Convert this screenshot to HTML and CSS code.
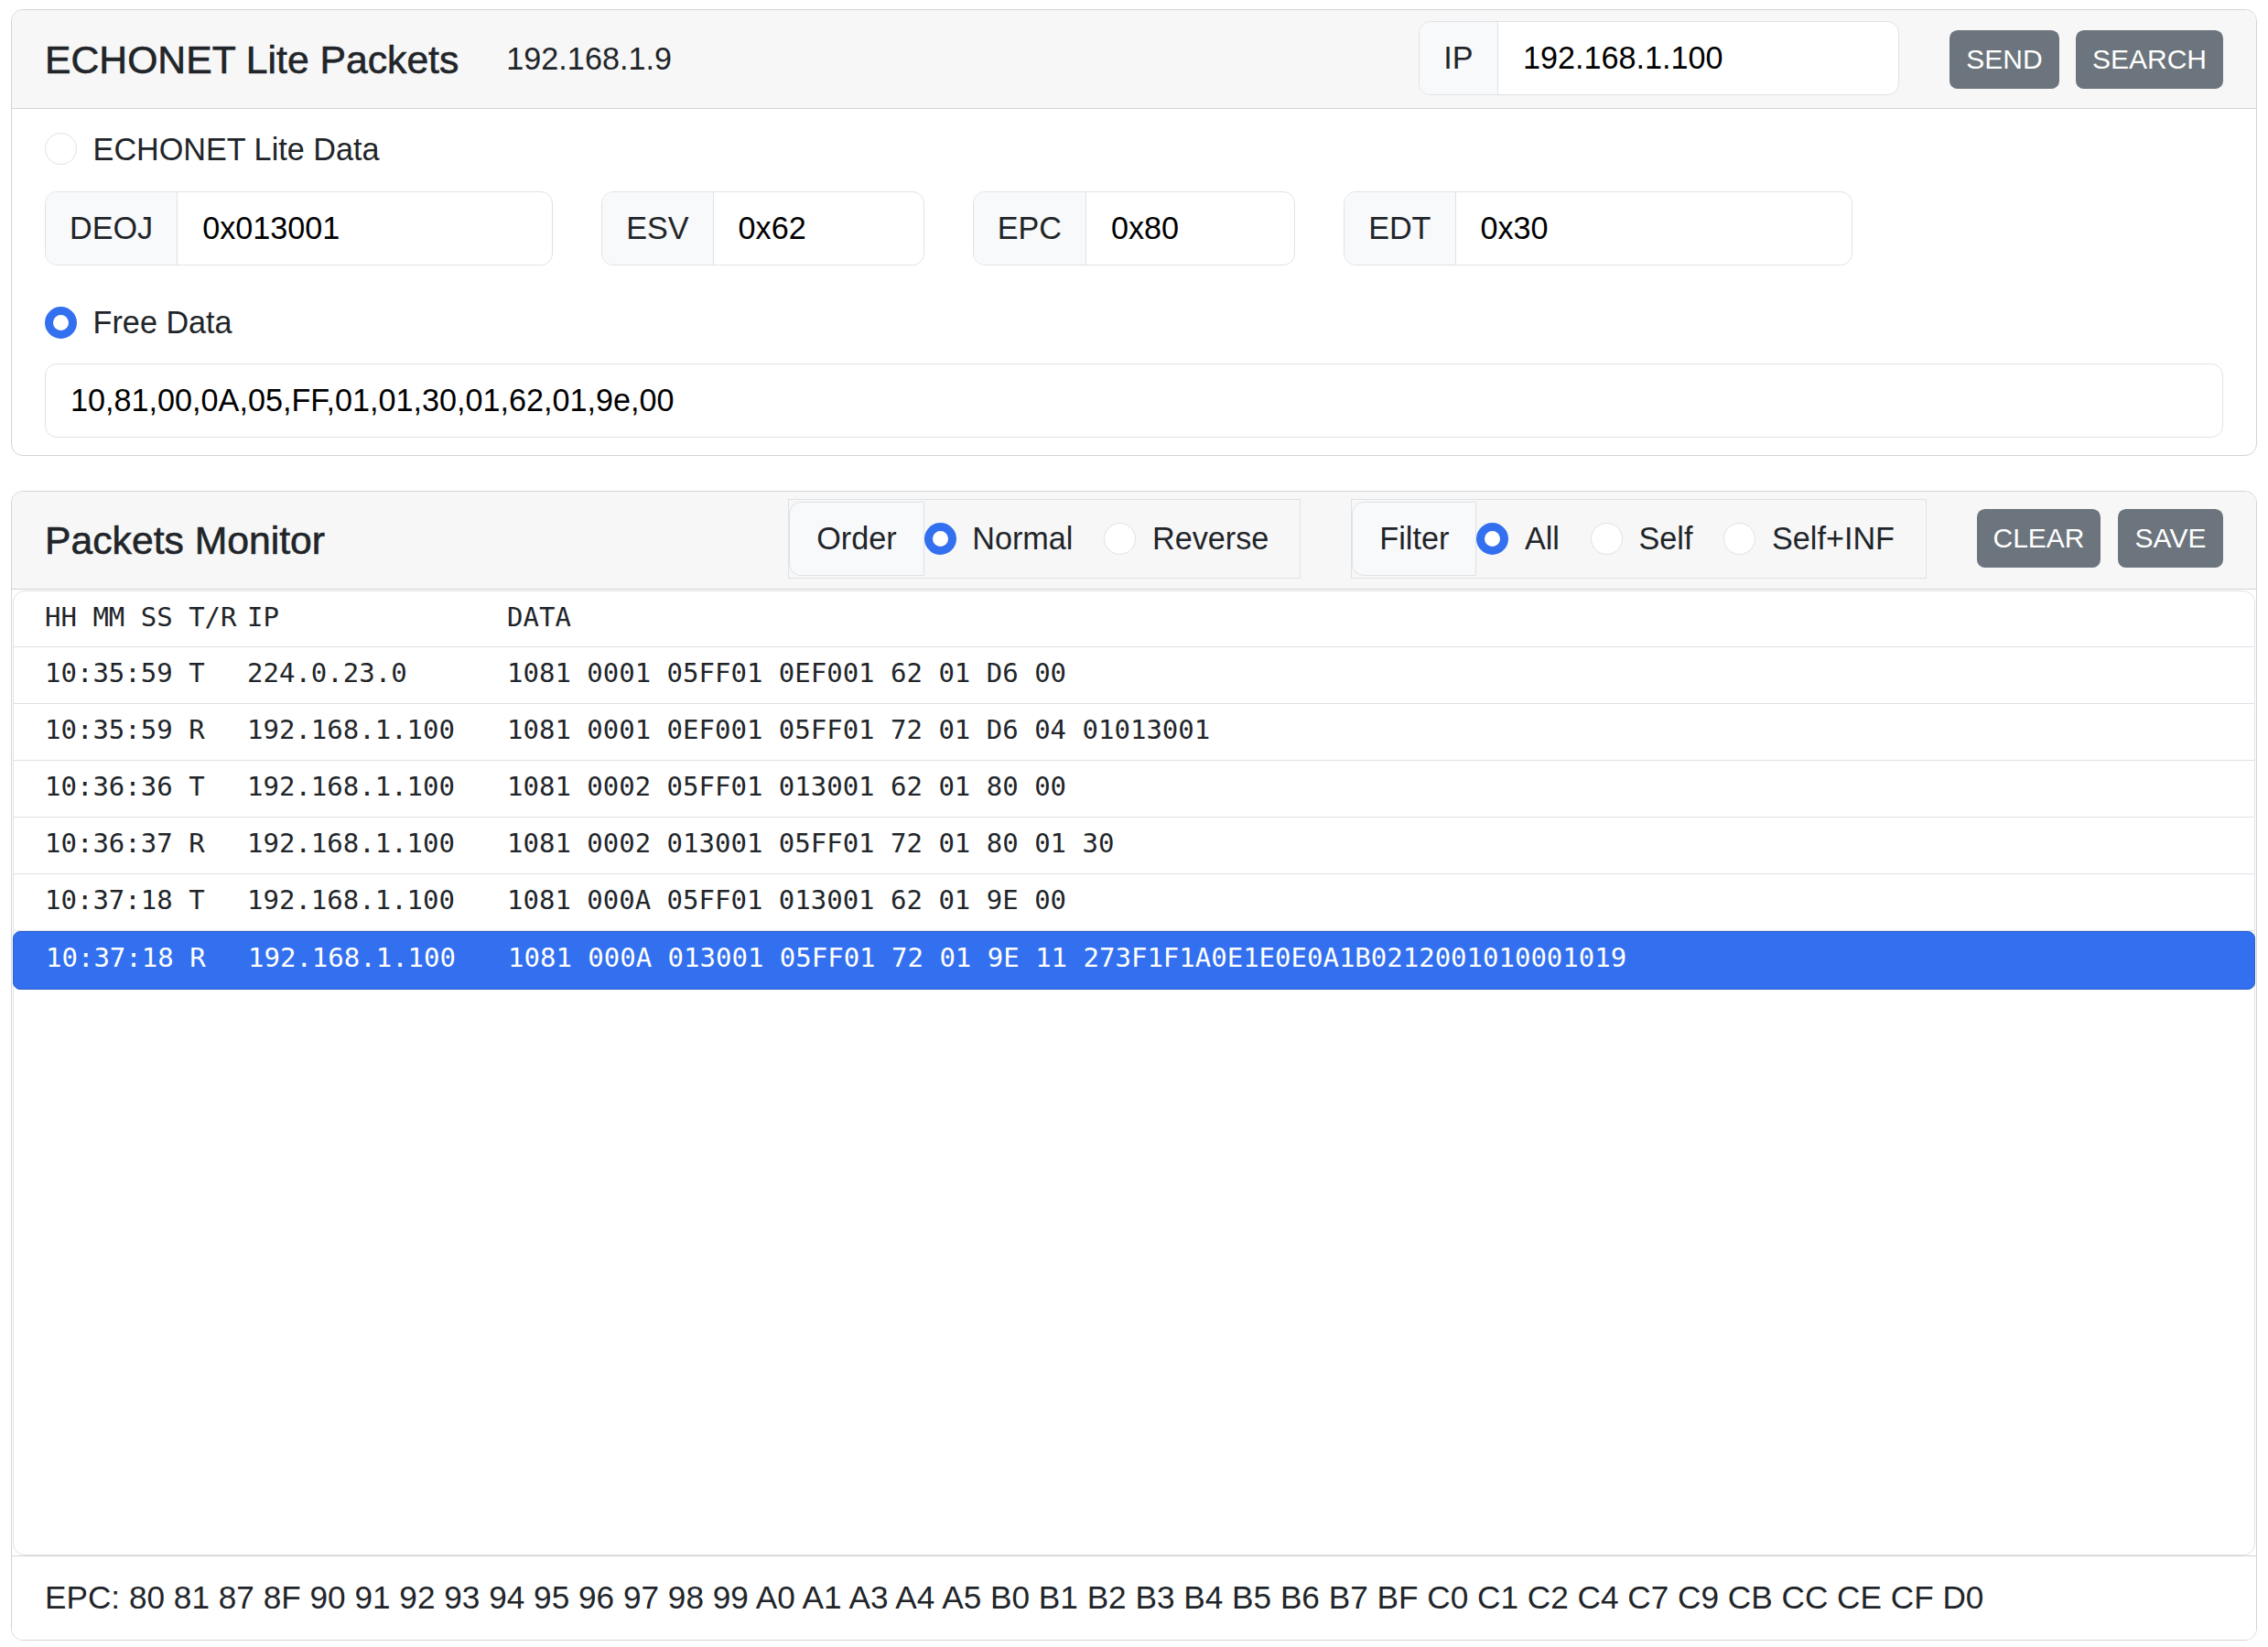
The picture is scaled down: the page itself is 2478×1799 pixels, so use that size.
FILE: index.html
```html
<!DOCTYPE html>
<html lang="en">
<head>
<meta charset="utf-8">
<title>ECHONET Lite Packets</title>
<link rel="stylesheet" href="styles.css">
</head>
<body>
  <div class="card card-send">
    <div class="card-header hdr-send">
      <h5 class="title">ECHONET Lite Packets</h5>
      <span class="myip">192.168.1.9</span>
      <div class="spacer"></div>
      <div class="igroup ip-group">
        <span class="ig-text ig-ip">IP</span>
        <span class="ig-input">192.168.1.100</span>
      </div>
      <button class="btn btn-send">SEND</button>
      <button class="btn btn-search">SEARCH</button>
    </div>
    <div class="card-body body-send">
      <div class="check"><span class="radio"></span><span class="check-label">ECHONET Lite Data</span></div>
      <div class="el-grid">
        <div class="igroup span3"><span class="ig-text ig-deoj">DEOJ</span><span class="ig-input">0x013001</span></div>
        <div class="igroup span2"><span class="ig-text">ESV</span><span class="ig-input">0x62</span></div>
        <div class="igroup span2"><span class="ig-text">EPC</span><span class="ig-input">0x80</span></div>
        <div class="igroup span3"><span class="ig-text">EDT</span><span class="ig-input">0x30</span></div>
      </div>
      <div class="check check-free"><span class="radio checked"></span><span class="check-label">Free Data</span></div>
      <div class="free-input">10,81,00,0A,05,FF,01,01,30,01,62,01,9e,00</div>
    </div>
  </div>

  <div class="card card-monitor">
    <div class="card-header hdr-monitor">
      <h5 class="title">Packets Monitor</h5>
      <div class="spacer"></div>
      <div class="rgroup">
        <span class="rg-text">Order</span>
        <span class="icheck"><span class="radio checked"></span><span>Normal</span></span>
        <span class="icheck"><span class="radio"></span><span>Reverse</span></span>
      </div>
      <div class="rgroup rgroup-filter">
        <span class="rg-text">Filter</span>
        <span class="icheck"><span class="radio checked"></span><span>All</span></span>
        <span class="icheck"><span class="radio"></span><span>Self</span></span>
        <span class="icheck"><span class="radio"></span><span>Self+INF</span></span>
      </div>
      <button class="btn btn-clear">CLEAR</button>
      <button class="btn btn-save">SAVE</button>
    </div>
    <div class="card-body body-monitor">
      <div class="plist">
        <div class="prow phead"><span>HH MM SS T/R</span><span>IP</span><span>DATA</span></div>
        <div class="prow"><span>10:35:59 T</span><span>224.0.23.0</span><span>1081 0001 05FF01 0EF001 62 01 D6 00</span></div>
        <div class="prow"><span>10:35:59 R</span><span>192.168.1.100</span><span>1081 0001 0EF001 05FF01 72 01 D6 04 01013001</span></div>
        <div class="prow"><span>10:36:36 T</span><span>192.168.1.100</span><span>1081 0002 05FF01 013001 62 01 80 00</span></div>
        <div class="prow"><span>10:36:37 R</span><span>192.168.1.100</span><span>1081 0002 013001 05FF01 72 01 80 01 30</span></div>
        <div class="prow"><span>10:37:18 T</span><span>192.168.1.100</span><span>1081 000A 05FF01 013001 62 01 9E 00</span></div>
        <div class="prow active"><span>10:37:18 R</span><span>192.168.1.100</span><span>1081 000A 013001 05FF01 72 01 9E 11 273F1F1A0E1E0E0A1B0212001010001019</span></div>
      </div>
    </div>
    <div class="card-footer">EPC: 80 81 87 8F 90 91 92 93 94 95 96 97 98 99 A0 A1 A3 A4 A5 B0 B1 B2 B3 B4 B5 B6 B7 BF C0 C1 C2 C4 C7 C9 CB CC CE CF D0</div>
  </div>
</body>
</html>
```

FILE: styles.css
```css
* { box-sizing: border-box; }

html, body { margin: 0; }

body {
  padding: 10px 12px 0;
  background: #fff;
  color: #212529;
  font-family: "Liberation Sans", Arial, sans-serif;
  font-size: 34.2px;
  line-height: 52.8px;
}

.card {
  border: 1px solid #d3d4d5;
  border-radius: 13px;
  overflow: hidden;
  background: #fff;
}

.card-monitor { margin-top: 38px; }

.card-header {
  display: flex;
  align-items: center;
  background: #f7f7f7;
  border-bottom: 1px solid #d3d4d5;
  padding: 0 36px;
}

.hdr-send { height: 108px; }
.hdr-monitor { height: 107px; }

.title {
  margin: 0 52px 0 0;
  font-size: 42.7px;
  font-weight: 500;
  line-height: 52px;
  -webkit-text-stroke: 0.6px #212529;
}

.myip { font-size: 34.2px; }

.spacer { flex: 1; }

.igroup {
  display: flex;
  height: 81px;
  border: 1px solid #dee2e6;
  border-radius: 13px;
  overflow: hidden;
  background: #fff;
}

.ig-text {
  display: flex;
  align-items: center;
  padding: 0 26px;
  background: #f8f9fa;
  border-right: 1px solid #dee2e6;
  color: #212529;
}

.ig-input {
  display: flex;
  align-items: center;
  padding: 0 27px;
  flex: 1;
  color: #000;
}

.ip-group { width: 525px; margin-top: -3px; }
.ig-ip { width: 86px; justify-content: center; padding: 0; }

.btn {
  height: 64px;
  padding: 0 17px;
  border: 0;
  border-radius: 8.8px;
  background: #6c757d;
  color: #fff;
  font-family: "Liberation Sans", Arial, sans-serif;
  font-size: 30px;
  line-height: 64px;
}

.btn-send { margin-left: 55px; width: 120px; }
.btn-search { margin-left: 18px; width: 161px; }
.btn-clear { margin-left: 55px; width: 135px; margin-top: -4px; }
.btn-save { margin-left: 19px; width: 115px; margin-top: -4px; }

.body-send { padding: 17.6px 36px 19px; }

.check {
  display: flex;
  align-items: center;
  height: 52.8px;
  gap: 17.6px;
}

.radio {
  flex: none;
  width: 35px;
  height: 35px;
  border-radius: 50%;
  border: 1px solid #dee2e6;
  background: #fff;
}

.radio.checked {
  border: 9px solid #3370f0;
  background: #fff;
}

.el-grid {
  margin-top: 19.6px;
  display: grid;
  grid-template-columns: repeat(12, 1fr);
  column-gap: 52.8px;
}

.span3 { grid-column: span 3; }
.span2 { grid-column: span 2; }

.check-free { margin-top: 36px; }

.free-input {
  margin-top: 18px;
  height: 81px;
  border: 1px solid #dee2e6;
  border-radius: 13px;
  padding: 0 27px;
  display: flex;
  align-items: center;
  color: #000;
}

/* monitor header groups */
.rgroup {
  display: flex;
  align-items: center;
  height: 87px;
  border: 1px solid #dee2e6;
  padding: 2px 0;
  margin-top: -3px;
}

.rgroup-filter { margin-left: 55px; }

.rg-text {
  display: flex;
  align-items: center;
  height: 100%;
  padding: 0 29px;
  background: #f8f9fa;
  border: 1px solid #dee2e6;
  border-radius: 13px 0 0 13px;
}

.icheck {
  display: flex;
  align-items: center;
  gap: 17.6px;
  margin-right: 34px;
}

/* packet list */
.body-monitor { padding: 1px 1px 0; }

.plist {
  height: 1054px;
  border: 1px solid #dee2e6;
  border-radius: 13px;
  font-family: "DejaVu Sans Mono", "Liberation Mono", monospace;
  font-size: 29px;
  line-height: 42px;
}

.prow {
  display: grid;
  grid-template-columns: 221px 284px 1fr;
  height: 62px;
  padding: 7px 0 0 34px;
  border-bottom: 1px solid #dee2e6;
  white-space: pre;
}

.prow.phead { height: 61px; }

.prow.active {
  background: #3370f0;
  color: #fff;
  border: 1px solid #2a5fcc;
  border-radius: 8px;
  height: 64px;
  margin: 0 -1px;
  padding-left: 35px;
}

.card-footer {
  border-top: 1px solid #d3d4d5;
  padding: 19px 36px 19px;
  height: 92px;
  background: #fff;
  font-size: 35.2px;
}
```
